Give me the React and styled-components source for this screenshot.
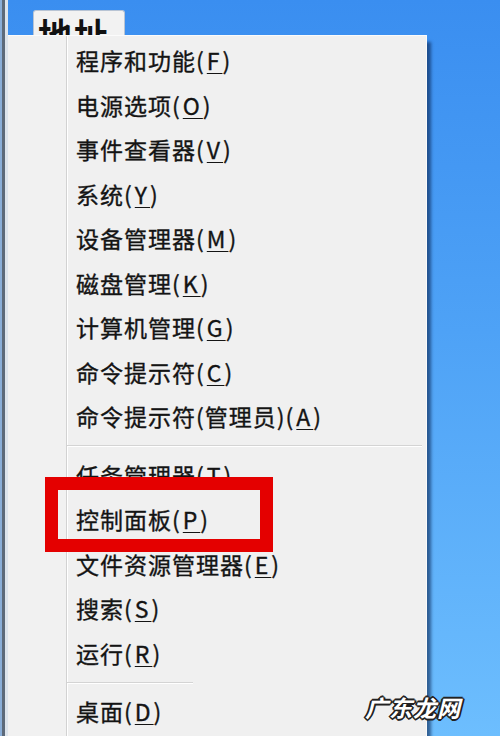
import React from 'react'
import styled, { createGlobalStyle } from 'styled-components'

const GlobalStyle = createGlobalStyle`
  html, body {
    margin: 0;
    padding: 0;
  }
  body {
    font-family: "Noto Sans CJK SC", "Noto Sans", sans-serif;
  }
`

const Page = styled.div`
  position: relative;
  display: flex;
  width: 500px;
  height: 736px;
  overflow: hidden;
  background: linear-gradient(180deg, #3a8ef0 0%, #4ea2f6 45%, #6dbefe 100%);
`

const LeftEdge = styled.div`
  width: 8px;
  flex: none;
  background: linear-gradient(
    90deg,
    #8aaed8 0,
    #8aaed8 2px,
    #5d6a7a 2px,
    #5d6a7a 5px,
    #dde4ec 5px,
    #dde4ec 8px
  );
`

const Main = styled.div`
  display: flex;
  flex-direction: column;
  padding-top: 10px;
`

const Tab = styled.div`
  width: 92px;
  height: 25px;
  margin-left: 25px;
  box-sizing: border-box;
  overflow: hidden;
  background: #f2f2f2;
  border: 1px solid #b8c4d4;
  border-bottom: none;
  border-radius: 3px 3px 0 0;
  padding: 6px 0 0 4px;
  font-size: 34px;
  font-weight: bold;
  line-height: 1;
  letter-spacing: 2px;
  color: #111;
`

const Menu = styled.div`
  display: flex;
  width: 419px;
  flex: 1;
  box-sizing: border-box;
  background: #f0f0f0;
  border-top: 1px solid #fbfbfb;
  border-right: 1px solid #fafafa;
  box-shadow: 4px 7px 3px rgba(10, 35, 80, 0.6);
`

const Gutter = styled.div`
  width: 58px;
  flex: none;
  background: #f1f1f1;
  border-right: 1px solid #d2d2d2;
  box-shadow: 1px 0 0 #ffffff;
`

const List = styled.div`
  display: flex;
  flex-direction: column;
  flex: 1;
  padding-top: 2px;
  padding-right: 4px;
`

const Item = styled.div`
  height: 44.5px;
  display: flex;
  align-items: center;
  padding-left: 9px;
  font-size: 23px;
  letter-spacing: 1px;
  color: #141414;
  -webkit-text-stroke: 0.35px #141414;
  white-space: nowrap;
`

const Key = styled.span`
  letter-spacing: 3px;
  u {
    text-decoration-thickness: 1px;
    text-underline-offset: 3px;
  }
`

const Separator = styled.div`
  height: 14px;
  display: flex;
  align-items: center;
  &::after {
    content: '';
    display: block;
    width: ${p => (p.$short ? '126px' : '100%')};
    height: 1px;
    background: #d4d4d4;
    box-shadow: 0 1px 0 #ffffff;
  }
`

const Highlight = styled.div`
  position: absolute;
  left: 45px;
  top: 477px;
  width: 228px;
  height: 75px;
  box-sizing: border-box;
  border: 13px solid #e40000;
`

const Watermark = styled.div`
  position: absolute;
  left: 365px;
  top: 690px;
  font-size: 23px;
  font-weight: bold;
  font-style: italic;
  letter-spacing: 1px;
  color: #ffffff;
  text-shadow:
    -2px 0 0 #222, 2px 0 0 #222, 0 -2px 0 #222, 0 2px 0 #222,
    -1px -1px 0 #222, 1px 1px 0 #222, -1px 1px 0 #222, 1px -1px 0 #222;
`

const groups = [
  [
    ['程序和功能', 'F'],
    ['电源选项', 'O'],
    ['事件查看器', 'V'],
    ['系统', 'Y'],
    ['设备管理器', 'M'],
    ['磁盘管理', 'K'],
    ['计算机管理', 'G'],
    ['命令提示符', 'C'],
    ['命令提示符(管理员)', 'A'],
  ],
  [
    ['任务管理器', 'T'],
    ['控制面板', 'P'],
    ['文件资源管理器', 'E'],
    ['搜索', 'S'],
    ['运行', 'R'],
  ],
  [['桌面', 'D']],
]

export default function App() {
  return (
    <Page>
      <GlobalStyle />
      <LeftEdge />
      <Main>
        <Tab>地址</Tab>
        <Menu>
          <Gutter />
          <List>
            {groups.map((group, gi) => (
              <React.Fragment key={gi}>
                {gi > 0 && <Separator $short={gi === 2} />}
                {group.map(([label, key]) => (
                  <Item key={label}>
                    {label}
                    <Key>
                      (<u>{key}</u>)
                    </Key>
                  </Item>
                ))}
              </React.Fragment>
            ))}
          </List>
        </Menu>
      </Main>
      <Highlight />
      <Watermark>广东龙网</Watermark>
    </Page>
  )
}
